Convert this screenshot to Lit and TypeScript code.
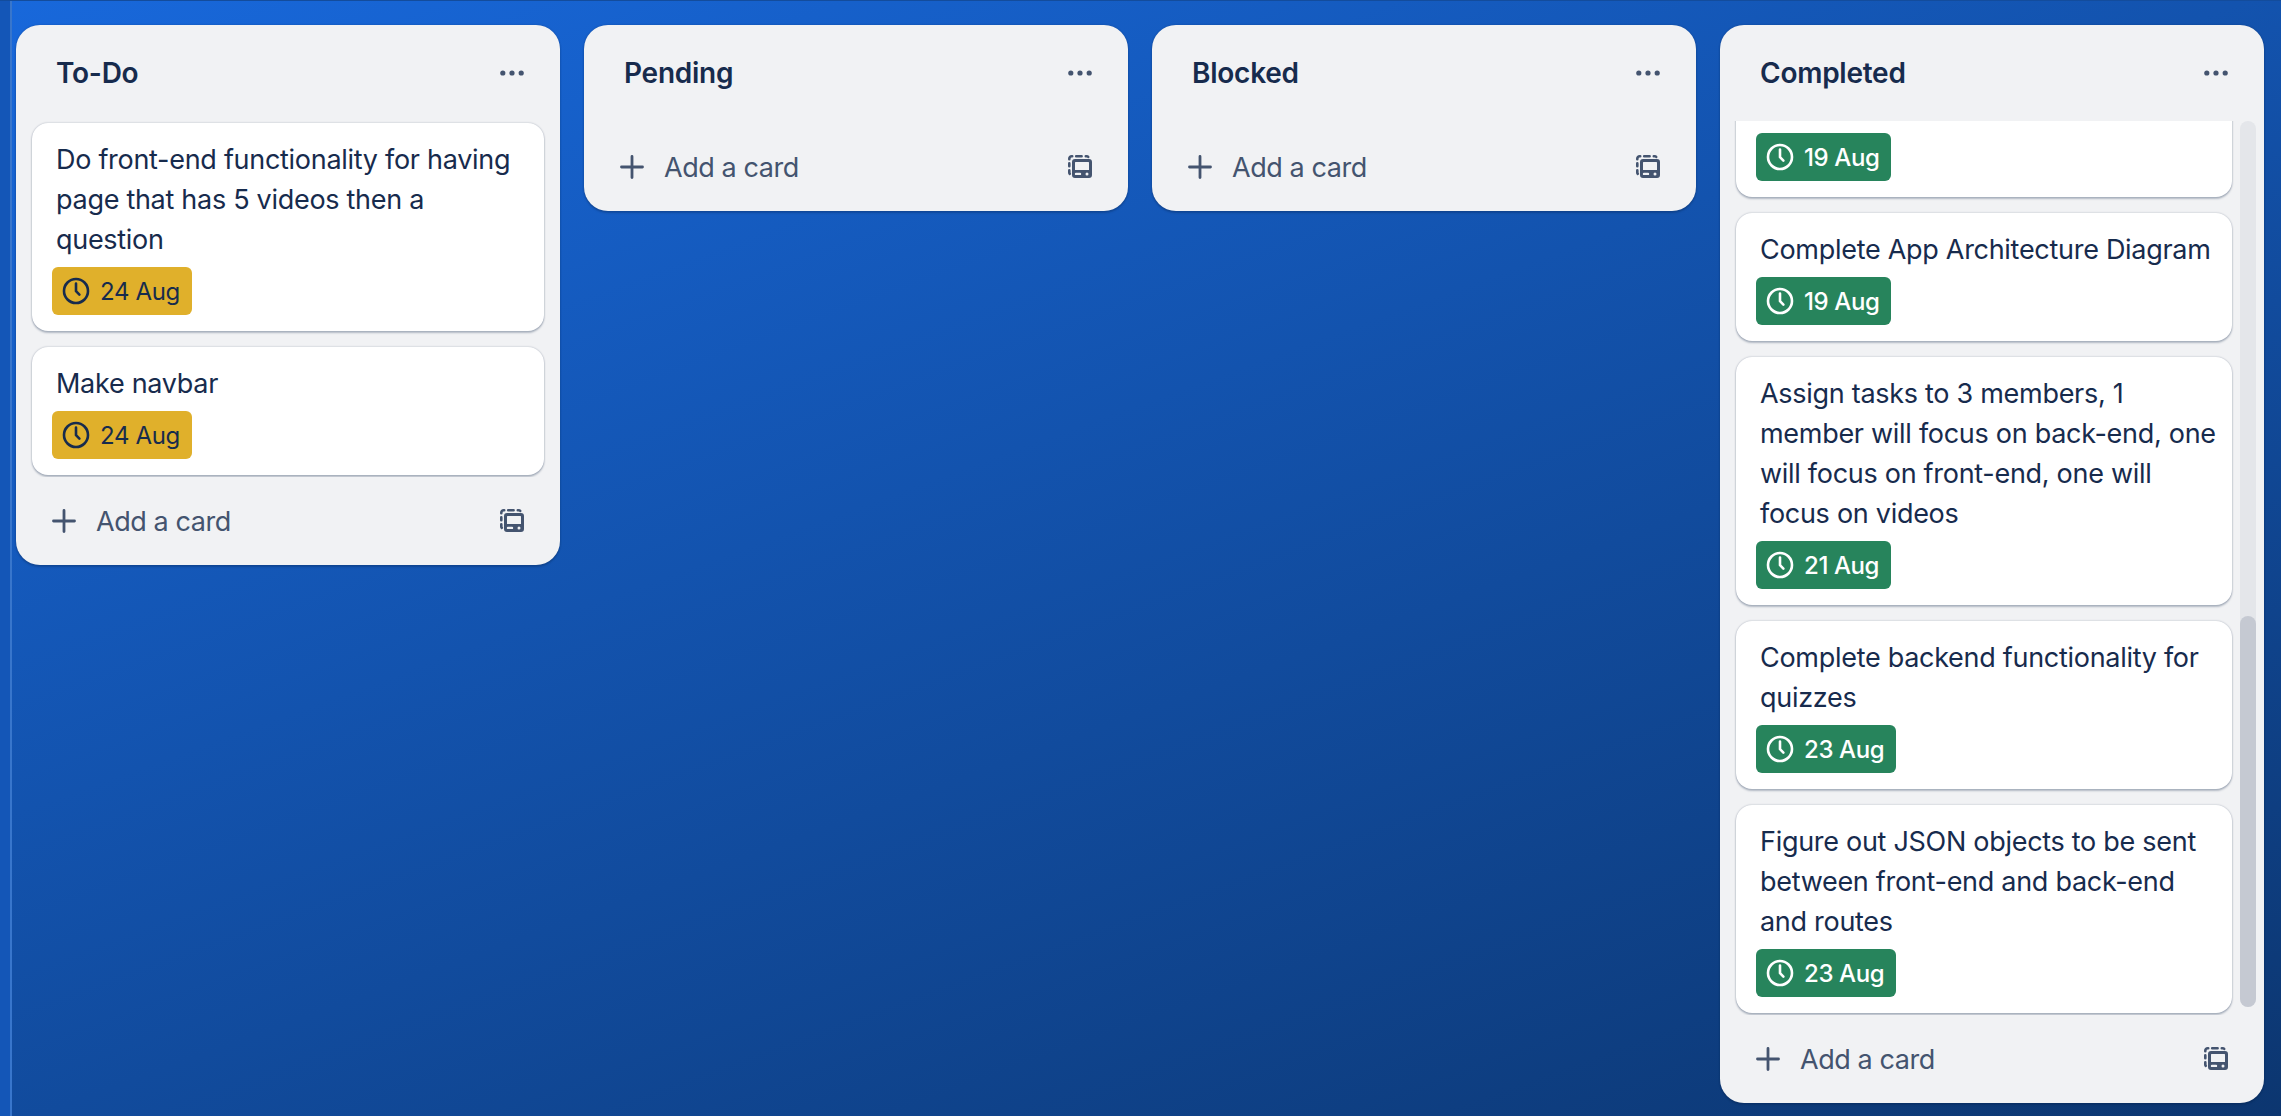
import { LitElement, html, css, svg, nothing } from "lit";
import { customElement, property } from "lit/decorators.js";
import { classMap } from "lit/directives/class-map.js";
import { styleMap } from "lit/directives/style-map.js";

interface Card {
  title: string[];
  due: string;
  done?: boolean;
}

interface Scroll {
  top: number;
  size: number;
}

interface List {
  name: string;
  cards: Card[];
  scroll?: Scroll;
}

const LISTS: List[] = [
  {
    name: "To-Do",
    cards: [
      {
        title: ["Do front-end functionality for having", "page that has 5 videos then a", "question"],
        due: "24 Aug",
      },
      { title: ["Make navbar"], due: "24 Aug" },
    ],
  },
  { name: "Pending", cards: [] },
  { name: "Blocked", cards: [] },
  {
    name: "Completed",
    scroll: { top: 495, size: 391 },
    cards: [
      { title: [], due: "19 Aug", done: true },
      { title: ["Complete App Architecture Diagram"], due: "19 Aug", done: true },
      {
        title: [
          "Assign tasks to 3 members, 1",
          "member will focus on back-end, one",
          "will focus on front-end, one will",
          "focus on videos",
        ],
        due: "21 Aug",
        done: true,
      },
      { title: ["Complete backend functionality for", "quizzes"], due: "23 Aug", done: true },
      {
        title: ["Figure out JSON objects to be sent", "between front-end and back-end", "and routes"],
        due: "23 Aug",
        done: true,
      },
    ],
  },
];

const clockShape = svg`
  <circle cx="14" cy="14" r="12" />
  <path d="M14 6.6V14.2L17.4 17.6" />`;

@customElement("board-card")
class BoardCard extends LitElement {
  @property({ attribute: false }) card!: Card;

  static styles = css`
    :host {
      display: block;
      flex: none;
    }
    .card {
      box-sizing: border-box;
      padding: 17px 20px 16px;
      border-radius: 16px;
      background: #fff;
      box-shadow: 0 2px 2px rgba(9, 30, 66, 0.25), 0 0 2px rgba(9, 30, 66, 0.31);
    }
    .title {
      min-height: 40px;
      margin: 0 0 7px 4px;
      color: #172b4d;
      font-size: 27px;
      line-height: 40px;
      letter-spacing: -0.29px;
      white-space: pre;
    }
    .badge {
      display: flex;
      align-items: center;
      box-sizing: border-box;
      width: max-content;
      height: 48px;
      padding: 0 12px 0 10px;
      gap: 10px;
      border-radius: 6px;
      background: #e0b02b;
      color: #172b4d;
      font-size: 24px;
      line-height: 48px;
      letter-spacing: -0.35px;
    }
    .badge.done {
      background: #27845c;
      color: #fff;
      font-weight: 500;
      letter-spacing: -0.4px;
    }
    .due {
      padding-top: 1px;
    }
    .clock {
      width: 28px;
      height: 28px;
      fill: none;
      stroke: currentColor;
      stroke-width: 2.6;
      stroke-linecap: round;
      stroke-linejoin: round;
    }
  `;

  render() {
    const { title, due, done = false } = this.card;
    return html`
      <div class="card">
        <div class="title">${title.join("\n")}</div>
        <div class=${classMap({ badge: true, done })}>
          <svg class="clock" viewBox="0 0 28 28">${clockShape}</svg>
          <span class="due">${due}</span>
        </div>
      </div>
    `;
  }
}

@customElement("board-list")
class BoardList extends LitElement {
  @property({ attribute: false }) list!: List;

  static styles = css`
    :host {
      display: flex;
      flex: none;
      min-height: 0;
      max-height: 100%;
    }
    .list {
      display: flex;
      flex-direction: column;
      width: 544px;
      min-height: 0;
      border-radius: 24px;
      background: #f1f2f4;
      box-shadow: 0 2px 2px rgba(9, 30, 66, 0.25), 0 0 2px rgba(9, 30, 66, 0.31);
    }
    .header {
      display: flex;
      flex: none;
      align-items: center;
      justify-content: space-between;
      height: 96px;
      padding: 0 36px 0 40px;
    }
    .name {
      margin: 0;
      color: #172b4d;
      font-size: 28px;
      font-weight: 600;
      line-height: 40px;
      letter-spacing: -0.25px;
    }
    .icon {
      display: block;
      width: 24px;
      height: 24px;
      color: #44546f;
      fill: currentColor;
    }
    .body {
      display: flex;
      flex: 0 1 auto;
      min-height: 0;
      padding: 0 14px;
      gap: 6px;
    }
    .body.scrolling {
      padding-right: 8px;
    }
    .cards {
      display: flex;
      flex: 1;
      flex-direction: column;
      justify-content: flex-end;
      min-width: 0;
      padding: 2px;
      gap: 16px;
      overflow: hidden;
    }
    .cards.empty {
      padding-bottom: 0;
    }
    .track {
      width: 16px;
      margin-bottom: 8px;
      border-radius: 8px;
      background: #e4e6ea;
    }
    .thumb {
      width: 16px;
      border-radius: 8px;
      background: #c5c9d2;
    }
    .footer {
      display: flex;
      flex: none;
      align-items: center;
      height: 88px;
      padding: 0 36px;
      gap: 20px;
    }
    .add {
      flex: 1;
      padding-top: 2px;
      color: #44546f;
      font-size: 27px;
      line-height: 40px;
      letter-spacing: -0.42px;
    }
    .stroke {
      fill: none;
      stroke: currentColor;
    }
    .plus {
      stroke-width: 2.8;
      stroke-linecap: round;
    }
  `;

  private get scrollbar() {
    const s = this.list.scroll;
    if (!s) return nothing;
    return html`<div class="track">
      <div class="thumb" style=${styleMap({ height: `${s.size}px`, marginTop: `${s.top}px` })}></div>
    </div>`;
  }

  render() {
    const { name, cards, scroll } = this.list;
    return html`
      <section class="list">
        <header class="header">
          <h2 class="name">${name}</h2>
          <svg class="icon" viewBox="0 0 24 24">
            <circle cx="2.8" cy="12" r="2.6" />
            <circle cx="12" cy="12" r="2.6" />
            <circle cx="21.2" cy="12" r="2.6" />
          </svg>
        </header>
        <div class=${classMap({ body: true, scrolling: !!scroll })}>
          <div class=${classMap({ cards: true, empty: !cards.length })}>
            ${cards.map((card) => html`<board-card .card=${card}></board-card>`)}
          </div>
          ${this.scrollbar}
        </div>
        <footer class="footer">
          <svg class="icon stroke plus" viewBox="0 0 24 24">
            <path d="M12 1.5V22.5M1.5 12H22.5" />
          </svg>
          <span class="add">Add a card</span>
          <svg class="icon" viewBox="0 0 24 24">
            <path
              fill-rule="evenodd"
              d="M7 4H21a3 3 0 0 1 3 3V20a3 3 0 0 1-3 3H7a3 3 0 0 1-3-3V7a3 3 0 0 1 3-3ZM7 7.6V15H21V7.6a.6.6 0 0 0-.6-.6H7.6a.6.6 0 0 0-.6.6ZM8 17.7a1.2 1.2 0 0 0 0 2.4H12a1.2 1.2 0 0 0 0-2.4ZM19 17.4a1.5 1.5 0 1 0 0 3 1.5 1.5 0 0 0 0-3Z"
            />
            <path
              class="stroke"
              stroke-width="2.6"
              stroke-linecap="round"
              d="M1.3 4.2V3.7A2.4 2.4 0 0 1 3.7 1.3H4.2M8.2 1.3H13.6M17.8 1.3H18.4Q19.8 1.3 20.2 1.9M1.3 8.4V11.2M1.3 15.4V17.4Q1.3 18.2 1.8 18.8"
            />
          </svg>
        </footer>
      </section>
    `;
  }
}

@customElement("app-root")
class AppRoot extends LitElement {
  static styles = css`
    :host {
      display: block;
      font-family: Inter, Roboto, "Liberation Sans", sans-serif;
    }
    .page {
      display: flex;
      box-sizing: border-box;
      width: 100%;
      height: 100vh;
      min-height: 1116px;
      overflow: hidden;
      border-top: 1px solid #134c9c;
      background: linear-gradient(160deg, #1868db 0%, #0c3670 100%);
    }
    .rail {
      flex: none;
      width: 10px;
      border-right: 2px solid #3876cc;
      background: #1456b7;
    }
    .board {
      display: flex;
      flex: 1;
      align-items: flex-start;
      box-sizing: border-box;
      min-width: 0;
      height: 1102px;
      padding: 24px 17px 0 4px;
      gap: 24px;
    }
  `;

  render() {
    return html`
      <div class="page">
        <aside class="rail"></aside>
        <main class="board">
          ${LISTS.map((list) => html`<board-list .list=${list}></board-list>`)}
        </main>
      </div>
    `;
  }
}
